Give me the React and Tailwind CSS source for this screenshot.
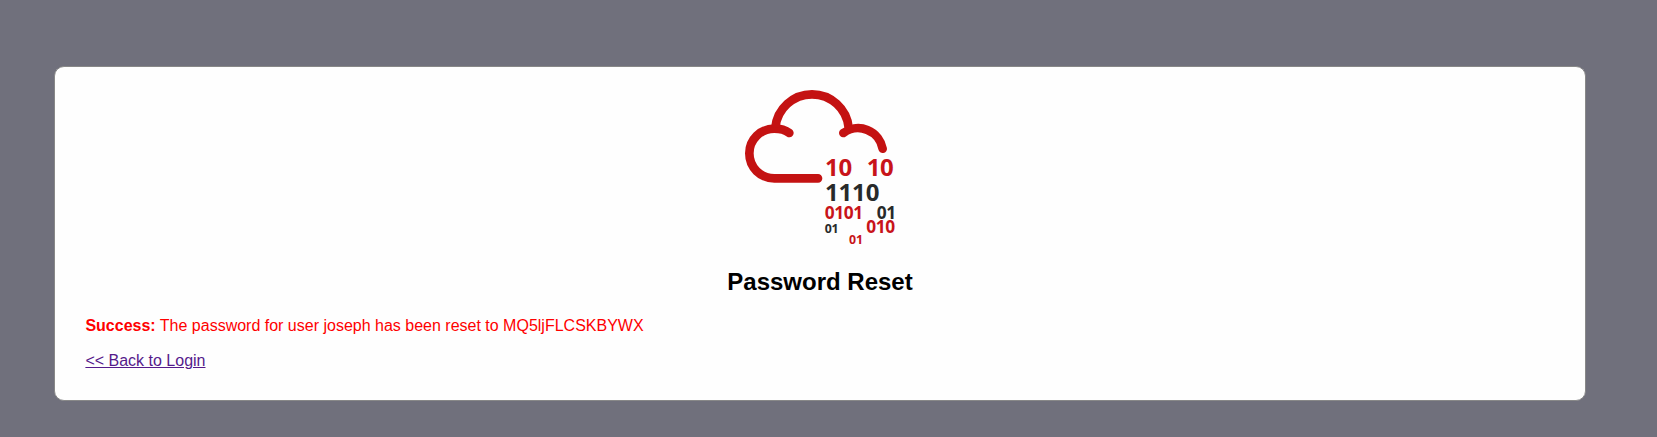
function CloudLogo() {
  return (
    <svg viewBox="0 0 510 510" className="block h-[170px] w-[170px]" aria-hidden="true">
      <g fill="none" stroke="#c41212" strokeWidth="26" strokeLinecap="round" strokeLinejoin="round">
        <path d="M163 159C151 150 134 146 118 146C76 146 43 179 43 220C43 262 76 295 118 295H249" />
        <path d="M121 143A110.5 110.5 0 0 1 341 143" strokeLinecap="butt" />
        <path d="M325 159A75 75 0 0 1 443 206" />
      </g>
      <g fill="#c8141a" fontFamily="'Noto Sans', 'Open Sans', sans-serif" fontWeight="700">
        <text x="270" y="288" fontSize="72" letterSpacing="-1">10</text>
        <text x="395" y="288" fontSize="72" letterSpacing="-1">10</text>
        <text x="270" y="364" fontSize="72" letterSpacing="-0.5" fill="#282a2a">1110</text>
        <text x="269" y="418" fontSize="52" letterSpacing="-1.2">0101</text>
        <text x="425" y="418" fontSize="52" letterSpacing="-1.2" fill="#282a2a">01</text>
        <text x="269" y="460" fontSize="37" letterSpacing="-0.5" fill="#282a2a">01</text>
        <text x="394" y="460" fontSize="52" letterSpacing="-1.2">010</text>
        <text x="342" y="492" fontSize="37" letterSpacing="-0.5">01</text>
      </g>
    </svg>
  );
}

export default function App() {
  return (
    <div className="h-[437px] bg-[#70707c] pt-[66px] pr-[71px] pl-[54px] font-['Liberation_Sans',Arial,sans-serif] text-base leading-[18px] text-black">
      <main className="h-[335px] rounded-[10px] border border-[#888888] bg-[#fefefe] px-[30.4px] pt-[13px]">
        <div className="flex justify-center">
          <CloudLogo />
        </div>
        <h2 className="mt-[18px] text-center text-2xl leading-[27px] font-bold">Password Reset</h2>
        <p className="mt-[22px] text-[#ff0000]">
          <b>Success:</b> The password for user joseph has been reset to MQ5ljFLCSKBYWX
        </p>
        <p className="mt-[17px]">
          <a href="#" className="text-[#551a8b] underline">&lt;&lt; Back to Login</a>
        </p>
      </main>
    </div>
  );
}
